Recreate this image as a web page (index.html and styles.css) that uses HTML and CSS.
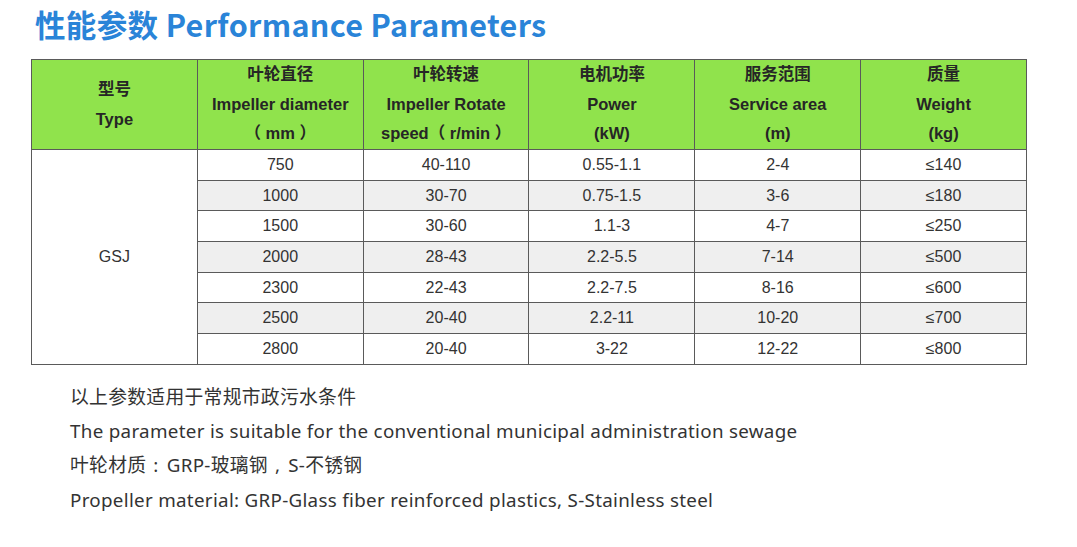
FILE: index.html
```html
<!DOCTYPE html>
<html lang="zh">
<head>
<meta charset="utf-8">
<title>Performance Parameters</title>
<link rel="stylesheet" href="styles.css">
</head>
<body>
<div class="page">
  <h1 class="title">性能参数 Performance Parameters</h1>
  <table class="spec">
    <thead>
      <tr>
        <th>型号<br>Type</th>
        <th>叶轮直径<br>Impeller diameter<br>（ mm ）</th>
        <th>叶轮转速<br>Impeller Rotate<br>speed（ r/min ）</th>
        <th>电机功率<br>Power<br>(kW)</th>
        <th>服务范围<br>Service area<br>(m)</th>
        <th>质量<br>Weight<br>(kg)</th>
      </tr>
    </thead>
    <tbody>
      <tr><td class="model" rowspan="7">GSJ</td><td>750</td><td>40-110</td><td>0.55-1.1</td><td>2-4</td><td>≤140</td></tr>
      <tr class="alt"><td>1000</td><td>30-70</td><td>0.75-1.5</td><td>3-6</td><td>≤180</td></tr>
      <tr><td>1500</td><td>30-60</td><td>1.1-3</td><td>4-7</td><td>≤250</td></tr>
      <tr class="alt"><td>2000</td><td>28-43</td><td>2.2-5.5</td><td>7-14</td><td>≤500</td></tr>
      <tr><td>2300</td><td>22-43</td><td>2.2-7.5</td><td>8-16</td><td>≤600</td></tr>
      <tr class="alt"><td>2500</td><td>20-40</td><td>2.2-11</td><td>10-20</td><td>≤700</td></tr>
      <tr><td>2800</td><td>20-40</td><td>3-22</td><td>12-22</td><td>≤800</td></tr>
    </tbody>
  </table>
  <div class="notes">
    <p>以上参数适用于常规市政污水条件</p>
    <p>The parameter is suitable for the conventional municipal administration sewage</p>
    <p>叶轮材质<span class="punct">:</span>GRP-玻璃钢<span class="punct">,</span>S-不锈钢</p>
    <p>Propeller material: GRP-Glass fiber reinforced plastics, S-Stainless steel</p>
  </div>
</div>
</body>
</html>
```
FILE: styles.css
```css
* { box-sizing: border-box; }
html, body { margin: 0; padding: 0; background: #fff; }
body { width: 1077px; height: 547px; overflow: hidden; }
.page { padding: 5px 0 0 31px; }
.title {
  margin: 0 0 15px 4px;
  font-family: "Noto Sans CJK SC", "Noto Sans", sans-serif;
  font-weight: 700;
  font-size: 30.5px;
  line-height: 39px;
  color: #2a84d8;
  letter-spacing: 0.35px;
}
.spec {
  border-collapse: collapse;
  width: 996px;
  table-layout: fixed;
  font-family: "Liberation Sans", Arial, "Noto Sans CJK SC", sans-serif;
  color: #333;
}
.spec th, .spec td {
  border: 1px solid #5a5a5a;
  text-align: center;
  padding: 0;
}
.spec th {
  background: #90e34c;
  height: 90px;
  font-size: 16.5px;
  font-weight: 700;
  line-height: 29.5px;
  color: #262626;
  vertical-align: middle;
}
.spec td {
  height: 30.7px;
  font-size: 16px;
  line-height: 20px;
  color: #333;
}
.spec tr.alt td { background: #efefef; }
.spec td.model { background: #fff; }
.notes {
  margin: 15px 0 0 39px;
  font-family: "Noto Sans", "Noto Sans CJK SC", sans-serif;
  font-size: 18.8px;
  letter-spacing: 0.3px;
  color: #333;
}
.notes p { margin: 0; line-height: 34.3px; }
.notes .punct { display: inline-block; margin: 0 8px 0 7px; }
```
